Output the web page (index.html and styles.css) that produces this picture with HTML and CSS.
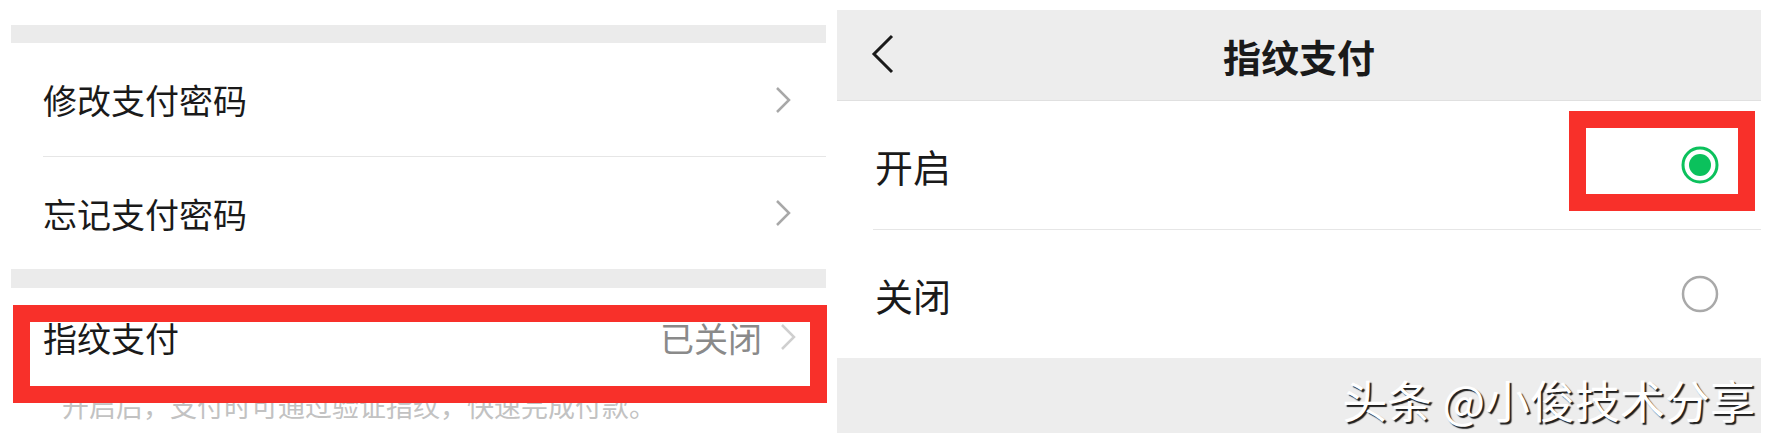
FILE: index.html
```html
<!DOCTYPE html>
<html lang="zh-CN">

<head>
    <meta charset="UTF-8">
    <meta name="viewport" content="width=device-width, initial-scale=1.0">
    <title>指纹支付</title>
    <link rel="stylesheet" href="styles.css">
</head>

<body>
    <div class="page">

        <!-- Left screen: pay settings -->
        <section class="panel left">
            <div class="band"></div>
            <div class="group">
                <div class="row">
                    <span class="label">修改支付密码</span>
                    <svg class="arrow" width="16" height="28" viewBox="0 0 16 28"><polyline points="2,2 14,14 2,26" /></svg>
                </div>
                <div class="line"></div>
                <div class="row">
                    <span class="label">忘记支付密码</span>
                    <svg class="arrow" width="16" height="28" viewBox="0 0 16 28"><polyline points="2,2 14,14 2,26" /></svg>
                </div>
            </div>
            <div class="band low"></div>
            <div class="finger">
                <div class="row">
                    <span class="label">指纹支付</span>
                    <span class="value">已关闭</span>
                    <svg class="arrow pale" width="16" height="28" viewBox="0 0 16 28"><polyline points="2,2 14,14 2,26" /></svg>
                </div>
                <p class="hint">开启后，支付时可通过验证指纹，快速完成付款。</p>
            </div>
        </section>

        <!-- Right screen: fingerprint option -->
        <section class="panel right">
            <header class="bar">
                <svg class="back" width="24" height="40" viewBox="0 0 24 40"><polyline points="21,2 3,20 21,38" /></svg>
                <h1>指纹支付</h1>
            </header>
            <ul class="options">
                <li>
                    <span class="label">开启</span>
                    <svg class="radio" width="40" height="40" viewBox="0 0 40 40">
                        <circle class="ring-on" cx="20" cy="20" r="17" />
                        <circle class="dot" cx="20" cy="20" r="11" />
                    </svg>
                </li>
                <li>
                    <span class="label">关闭</span>
                    <svg class="radio" width="40" height="40" viewBox="0 0 40 40">
                        <circle class="ring-off" cx="20" cy="20" r="17" />
                    </svg>
                </li>
            </ul>
            <div class="foot"><span class="mark">头条 @小俊技术分享</span></div>
        </section>

        <!-- red highlight frames -->
        <div class="frame frame-left"></div>
        <div class="frame frame-right"></div>
    </div>
</body>

</html>
```

FILE: styles.css
```css
body {
    margin: 0;
    background: #fff;
    font-family: "Noto Sans CJK SC", "Noto Sans", sans-serif;
    color: #1a1a1a;
}

.page {
    position: relative;
    display: flex;
    width: 1770px;
    height: 445px;
    overflow: hidden;
}

.panel {
    display: flex;
    flex-direction: column;
    background: #fff;
}

/* left screen */
.left {
    width: 815px;
    margin-left: 11px;
    padding-top: 25px;
}

.band {
    height: 18px;
    background: #ebebeb;
}

.band.low {
    height: 19px;
}

.row {
    display: flex;
    align-items: center;
    height: 113px;
    padding: 0 35px 0 32px;
}

.group .row:last-child {
    height: 112px;
}

.label {
    font-size: 34px;
    flex: 1;
}

.line {
    height: 1px;
    margin-left: 32px;
    background: #e6e6e6;
}

.arrow polyline {
    fill: none;
    stroke: #a8a8a8;
    stroke-width: 2.5;
}

.arrow.pale polyline {
    stroke: #cfcfcf;
}

.finger .row {
    height: 98px;
    padding-right: 30px;
}

.value {
    font-size: 34px;
    color: #8a8a8a;
    margin-right: 18px;
}

.hint {
    margin: 0;
    padding-left: 51px;
    font-size: 27px;
    line-height: 40px;
    color: #c2c2c2;
}

/* right screen */
.right {
    width: 924px;
    margin-left: 11px;
    padding-top: 10px;
}

.bar {
    position: relative;
    display: flex;
    align-items: center;
    justify-content: center;
    height: 90px;
    background: #ededed;
    border-bottom: 1px solid #e0e0e0;
}

.back {
    position: absolute;
    left: 34px;
    top: 24px;
}

.back polyline {
    fill: none;
    stroke: #1a1a1a;
    stroke-width: 3;
}

.bar h1 {
    margin: 0;
    font-size: 38px;
    font-weight: bold;
}

.options {
    list-style: none;
    margin: 0;
    padding: 0;
}

.options li {
    display: flex;
    align-items: center;
    height: 128px;
    padding: 0 41px 0 38px;
}

.options li + li {
    border-top: 1px solid #e6e6e6;
    margin-left: 36px;
    padding-left: 2px;
}

.options .label {
    font-size: 38px;
}

.ring-on {
    fill: none;
    stroke: #0bc15c;
    stroke-width: 3;
}

.dot {
    fill: #0bc15c;
}

.ring-off {
    fill: none;
    stroke: #a9a9a9;
    stroke-width: 2.5;
}

.foot {
    display: flex;
    align-items: center;
    justify-content: flex-end;
    height: 75px;
    padding: 8px 6px 0 0;
    box-sizing: border-box;
    background: #ededed;
}

.mark {
    font-size: 45px;
    line-height: 50px;
    color: #fff;
    text-shadow: 2px 2px 1px #1e1e1e;
}

/* annotation frames */
.frame {
    position: absolute;
    box-sizing: border-box;
    border: 17px solid #f8302a;
}

.frame-left {
    left: 13px;
    top: 305px;
    width: 814px;
    height: 98px;
}

.frame-right {
    left: 1569px;
    top: 111px;
    width: 186px;
    height: 100px;
}
```
